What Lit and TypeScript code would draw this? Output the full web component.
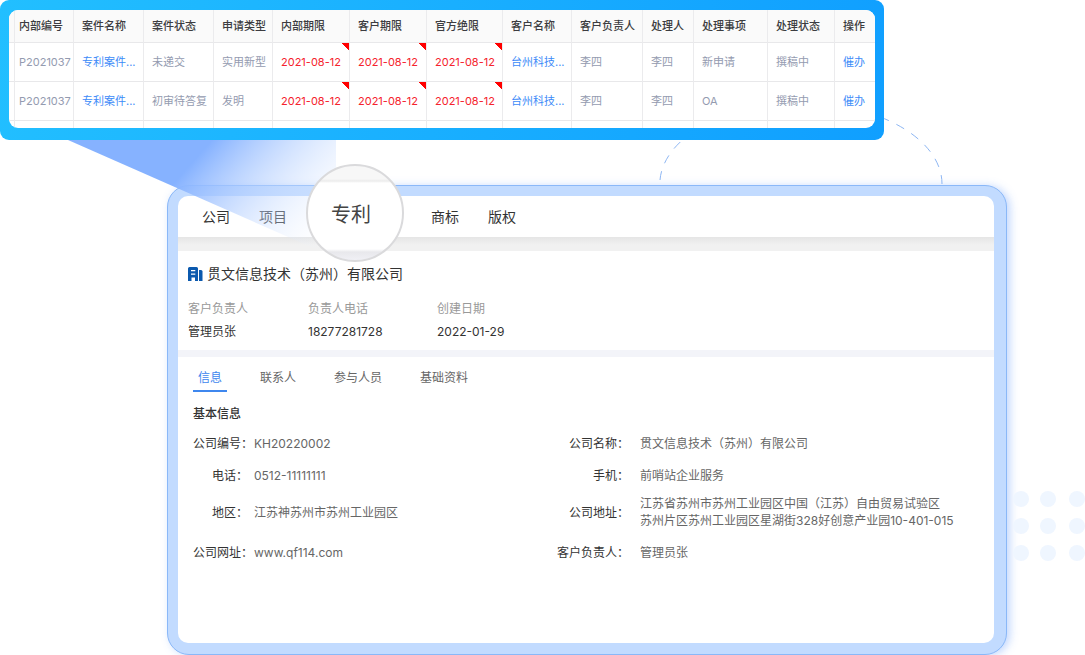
import { LitElement, html, css, svg, nothing } from "lit";
import { customElement, state } from "lit/decorators.js";
import { classMap } from "lit/directives/class-map.js";

interface CaseRow {
  no: string;
  name: string;
  status: string;
  type: string;
  dates: string[];
  client: string;
  owner: string;
  handler: string;
  item: string;
  progress: string;
}

const HEADERS = [
  "内部编号", "案件名称", "案件状态", "申请类型", "内部期限", "客户期限", "官方绝限",
  "客户名称", "客户负责人", "处理人", "处理事项", "处理状态", "操作",
];

const DATES = ["2021-08-12", "2021-08-12", "2021-08-12"];

const ROWS: CaseRow[] = [
  { no: "P2021037", name: "专利案件...", status: "未递交", type: "实用新型", dates: DATES, client: "台州科技...", owner: "李四", handler: "李四", item: "新申请", progress: "撰稿中" },
  { no: "P2021037", name: "专利案件...", status: "初审待答复", type: "发明", dates: DATES, client: "台州科技...", owner: "李四", handler: "李四", item: "OA", progress: "撰稿中" },
];

const FONT = css`
  :host {
    display: block;
    font-family: Inter, "Noto Sans CJK SC", sans-serif;
  }
  button {
    font: inherit;
    color: inherit;
    background: none;
    border: 0;
    margin: 0;
    padding: 0;
    cursor: pointer;
  }
  a {
    color: inherit;
    text-decoration: none;
  }
`;

@customElement("case-table")
export class CaseTable extends LitElement {
  static styles = [
    FONT,
    css`
      .frame {
        padding: 10px 9px 12px;
        border-radius: 9px;
        background: linear-gradient(100deg, #22bfff, #109fff);
      }
      .clip {
        overflow: hidden;
        border-radius: 9px;
        background: #fff;
      }
      table {
        width: 100%;
        table-layout: fixed;
        border-collapse: separate;
        border-spacing: 0;
        font-size: 11px;
        line-height: 16px;
        color: #949bb0;
      }
      .c6 { width: 6px; }
      .c40 { width: 41px; }
      .c51 { width: 51px; }
      .c59 { width: 59px; }
      .c67 { width: 67px; }
      .c69 { width: 69px; }
      .c70 { width: 70px; }
      .c71 { width: 71px; }
      .c74 { width: 74px; }
      .c76 { width: 76px; }
      .c77 { width: 77px; }
      th,
      td {
        box-sizing: border-box;
        height: 39px;
        padding: 0 0 0 8px;
        border-right: 1px solid #ebebed;
        border-bottom: 1px solid #e8e8ea;
        text-align: left;
        white-space: nowrap;
      }
      thead th,
      thead td {
        height: 33px;
        background: #fafafa;
        color: #3c3c40;
        font-weight: 500;
      }
      th:last-child,
      td:last-child {
        border-right: 0;
      }
      .edge {
        padding: 0;
      }
      .no {
        padding-left: 4px;
      }
      .link {
        color: #3d8bf8;
      }
      .late {
        color: #f5222d;
        background: linear-gradient(225deg, #ff0000 5px, transparent 5px) no-repeat right top / 8px 8px;
      }
      .tail td {
        height: 7px;
        border-bottom: 0;
      }
    `,
  ];

  render() {
    return html`
      <div class="frame">
        <div class="clip">
          <table>
            <colgroup>
              <col class="c6" /><col class="c59" /><col class="c70" /><col class="c70" /><col class="c59" />
              <col class="c77" /><col class="c77" /><col class="c76" /><col class="c69" /><col class="c71" />
              <col class="c51" /><col class="c74" /><col class="c67" /><col class="c40" />
            </colgroup>
            <thead>
              <tr>
                <td class="edge"></td>
                ${HEADERS.map((h, i) => html`<th scope="col" class=${i === 0 ? "no" : nothing}>${h}</th>`)}
              </tr>
            </thead>
            <tbody>
              ${ROWS.map(
                (r) => html`<tr>
                  <td class="edge"></td>
                  <td class="no">${r.no}</td>
                  <td class="link"><a href="#case">${r.name}</a></td>
                  <td>${r.status}</td>
                  <td>${r.type}</td>
                  ${r.dates.map((d) => html`<td class="late">${d}</td>`)}
                  <td class="link"><a href="#client">${r.client}</a></td>
                  <td>${r.owner}</td>
                  <td>${r.handler}</td>
                  <td>${r.item}</td>
                  <td>${r.progress}</td>
                  <td class="link"><button type="button">催办</button></td>
                </tr>`,
              )}
              <tr class="tail">
                <td class="edge"></td>
                ${HEADERS.map(() => html`<td></td>`)}
              </tr>
            </tbody>
          </table>
        </div>
      </div>
    `;
  }
}

@customElement("company-window")
export class CompanyWindow extends LitElement {
  static styles = [
    FONT,
    css`
      :host {
        display: flex;
        box-sizing: border-box;
        padding: 10px 12px 11px 10px;
        border: 1px solid #8ab8f8;
        border-radius: 22px;
        background: #c2dbff;
        box-shadow: 3px 1px 8px rgba(80, 140, 250, 0.35);
      }
      .page {
        flex: 1;
        border-radius: 10px;
        background: #fff;
        font-size: 12px;
        line-height: 18px;
        color: #333;
      }
      nav {
        display: flex;
        align-items: center;
        height: 41px;
        padding-left: 24px;
        font-size: 14px;
      }
      nav button {
        margin-right: 29px;
      }
      .slot {
        position: relative;
        align-self: stretch;
        width: 98px;
        margin: 0 27px 0 -10px;
      }
      nav .lens {
        position: absolute;
        z-index: 3;
        top: -32px;
        left: 0;
        box-sizing: border-box;
        width: 98px;
        height: 98px;
        margin: 0;
        padding: 4px 8px 0 0;
        border: 2px solid #dadadc;
        border-radius: 50%;
        background: linear-gradient(#f7f7f7 0 13px, #ececec 15px, #fff 17px 83px, #e8e8ec 86px, #f0f0f5 94px);
        color: #444;
        font-size: 20px;
      }
      .band {
        height: 14px;
        background: linear-gradient(#e5e5e5, #f1f1f1 8px);
      }
      .summary {
        padding: 12px 10px 9px;
        border-bottom: 7px solid #f3f4f9;
      }
      h1 {
        display: flex;
        align-items: center;
        gap: 4px;
        margin: 0 0 15px;
        font-size: 14px;
        line-height: 22px;
        font-weight: 400;
      }
      .facts {
        display: grid;
        grid-template-columns: 120px 129px auto;
        margin: 0;
      }
      .facts dt {
        margin-bottom: 5px;
        color: #999;
      }
      dd {
        margin: 0;
      }
      .tabs {
        display: flex;
        gap: 28px;
        padding: 12px 15px 0;
        color: #666;
      }
      .tabs button {
        padding: 0 5px 3px;
        border-bottom: 2px solid transparent;
      }
      .tabs .on {
        color: #3f87ee;
        border-color: #3f87ee;
      }
      h2 {
        margin: 13px 15px 4px;
        font-size: 12px;
        line-height: 18px;
        font-weight: 500;
      }
      .details {
        display: grid;
        grid-template-columns: 60px 304fr 72px 365fr;
        grid-template-rows: 32px 32px minmax(42px, auto) 38px;
        align-items: center;
        margin: 0 0 0 15px;
        line-height: 17px;
      }
      .details dt {
        text-align: right;
        white-space: nowrap;
      }
      .details .short {
        padding-right: 5px;
      }
      .details dd {
        padding-left: 1px;
        color: #666;
      }
      .details .far {
        padding-left: 11px;
      }
    `,
  ];

  @state() private tab = "信息";

  render() {
    return html`
      <div class="page">
        <nav>
          <button type="button">公司</button>
          <button type="button">项目</button>
          <div class="slot"><button type="button" class="lens">专利</button></div>
          <button type="button">商标</button>
          <button type="button">版权</button>
        </nav>
        <div class="band"></div>
        <section class="summary">
          <h1>
            <svg width="15" height="14" viewBox="0 0 15 14" aria-hidden="true">
              <path fill="#0b59ae" fill-rule="evenodd" d="M1.5 0H8.5Q10 0 10 1.5V14H7V10.5H3.5V14H0V1.5Q0 0 1.5 0ZM3 3V4.3H7.3V3ZM3 6.5V7.8H7.3V6.5Z" />
              <path fill="#0b59ae" d="M11 3H13Q14.5 3 14.5 4.5V14H11Z" />
            </svg>
            贯文信息技术（苏州）有限公司
          </h1>
          <dl class="facts">
            <div><dt>客户负责人</dt><dd>管理员张</dd></div>
            <div><dt>负责人电话</dt><dd>18277281728</dd></div>
            <div><dt>创建日期</dt><dd>2022-01-29</dd></div>
          </dl>
        </section>
        <div class="tabs" role="tablist">
          ${["信息", "联系人", "参与人员", "基础资料"].map(
            (t) => html`<button
              type="button"
              role="tab"
              aria-selected=${this.tab === t}
              class=${classMap({ on: this.tab === t })}
              @click=${() => (this.tab = t)}
            >${t}</button>`,
          )}
        </div>
        <h2>基本信息</h2>
        <dl class="details">
          <dt>公司编号：</dt><dd>KH20220002</dd>
          <dt>公司名称：</dt><dd class="far">贯文信息技术（苏州）有限公司</dd>
          <dt class="short">电话：</dt><dd>0512-11111111</dd>
          <dt>手机：</dt><dd class="far">前哨站企业服务</dd>
          <dt class="short">地区：</dt><dd>江苏神苏州市苏州工业园区</dd>
          <dt>公司地址：</dt>
          <dd class="far">江苏省苏州市苏州工业园区中国（江苏）自由贸易试验区<br />苏州片区苏州工业园区星湖街328好创意产业园10-401-015</dd>
          <dt>公司网址：</dt><dd>www.qf114.com</dd>
          <dt>客户负责人：</dt><dd class="far">管理员张</dd>
        </dl>
      </div>
    `;
  }
}

@customElement("app-root")
export class AppRoot extends LitElement {
  static styles = css`
    :host {
      position: relative;
      display: flex;
      flex-direction: column;
      gap: 45px;
      min-height: 100vh;
      overflow: hidden;
      background: #fff;
    }
    case-table {
      position: relative;
      z-index: 2;
      margin-right: 201px;
    }
    company-window {
      flex: 1;
      margin: 0 78px 0 167px;
    }
    .beam,
    .arc,
    .dots {
      position: absolute;
      pointer-events: none;
    }
    .beam {
      z-index: 1;
      top: 140px;
      left: 68px;
    }
    .arc {
      top: 102px;
      right: 142px;
    }
    .dots {
      top: 491px;
      right: 0;
    }
  `;

  render() {
    return html`
      <svg class="arc" width="284" height="83" viewBox="0 0 284 83" fill="none" stroke="#8db6f3" aria-hidden="true">
        <path d="M283 82A141 81 0 0 0 142 1" stroke-dasharray="9 8.5" />
        <path d="M1 78A141 81 0 0 1 142 1" stroke-dasharray="9 8.5" />
      </svg>
      <case-table></case-table>
      <company-window></company-window>
      <svg class="beam" width="268" height="118" viewBox="0 0 268 118" aria-hidden="true">
        <defs>
          <linearGradient id="ray" gradientUnits="userSpaceOnUse" x1="122" y1="25" x2="240" y2="129">
            <stop offset="0" stop-color="#86b2ff" />
            <stop offset="1" stop-color="#f4f8ff" stop-opacity="0" />
          </linearGradient>
        </defs>
        <path d="M0 0H268V118Z" fill="url(#ray)" />
      </svg>
      <svg class="dots" width="72" height="70" viewBox="0 0 72 70" fill="#eff6ff" aria-hidden="true">
        ${[8, 35, 62].map((y) => [8, 35, 64].map((x) => svg`<circle cx=${x} cy=${y} r="8" />`))}
      </svg>
    `;
  }
}
